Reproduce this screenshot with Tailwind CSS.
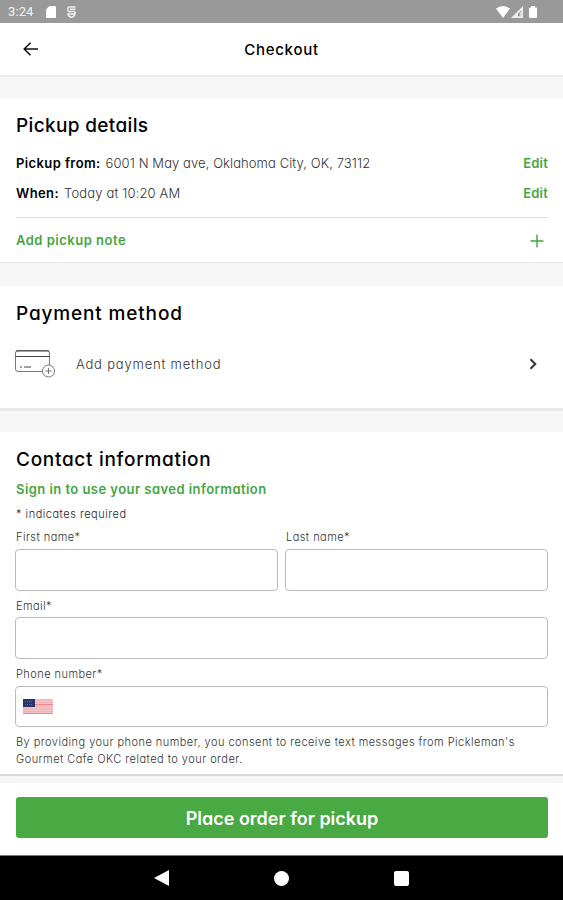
<!DOCTYPE html>
<html lang="en">
  <head>
    <meta charset="UTF-8" />
    <meta name="viewport" content="width=device-width, initial-scale=1.0" />
    <title>Checkout</title>
    <script src="https://cdn.jsdelivr.net/npm/@tailwindcss/browser@4"></script>
  </head>
  <body class="h-[900px] overflow-hidden bg-[#f6f6f6] font-['Inter',sans-serif] text-black [font-feature-settings:'cv11']">
    <!-- Status bar -->
    <div class="flex h-[23px] items-center bg-[#999] pl-2 pr-[26px] pt-px">
      <span class="w-[38px] font-['Roboto',sans-serif] text-[13px] tracking-[0.1px] text-[#f4f4f4]">3:24</span>
      <svg class="h-3 w-[10px]" viewBox="0 0 10 12" fill="#fff">
        <path d="M3.4 0H9a1 1 0 0 1 1 1v10a1 1 0 0 1-1 1H1a1 1 0 0 1-1-1V3.5z" />
      </svg>
      <svg class="ml-[11px] h-3 w-[9px]" viewBox="0 0 9 12" fill="none" stroke="#eee" stroke-width="1.5">
        <path d="M8.5 1H2Q1 1 1 2v2.200Q1 5.500 2 5.500h5q1 0 1 1V8.500Q7.500 10.500 4.500 11.200 1.500 10.500 1 8.500V8h7M3 3.200h5.500" />
      </svg>
      <svg class="ml-auto h-3 w-[14px]" viewBox="0 0 14 12" fill="#fff">
        <path d="M7 12 0 2.600Q7-2.600 14 2.600z" />
      </svg>
      <svg class="ml-px h-3 w-3" viewBox="0 0 12 12">
        <path d="M12 0v12H0z" fill="#eee" />
        <path d="M10.200 4.500v5.700H7V7.500z" fill="#999" />
        <path d="M9.300 6v4" stroke="#eee" />
      </svg>
      <svg class="ml-[6px] h-3 w-2" viewBox="0 0 8 12" fill="#fff">
        <path d="M2 1.500V0h4v1.500h1a1 1 0 0 1 1 1V11a1 1 0 0 1-1 1H1a1 1 0 0 1-1-1V2.500a1 1 0 0 1 1-1z" />
      </svg>
    </div>

    <!-- Header -->
    <header class="grid h-[54px] grid-cols-[1fr_auto_1fr] items-center border-b-2 border-[#eee] bg-white px-[23px]">
      <svg class="h-[14px] w-[15px]" viewBox="0 0 15 14" fill="none" stroke="#111" stroke-width="1.5">
        <path d="M15 7H1M7.500 .700 1.200 7l6.300 6.300" />
      </svg>
      <h1 class="pt-[2px] text-[15px] font-medium tracking-[0.75px]">Checkout</h1>
    </header>

    <!-- Pickup details -->
    <section class="mt-[21px] h-[165px] border-b border-[#e6e6e6] bg-white pr-[15px] pl-4 pt-[14px]">
      <h2 class="text-[19px] leading-7 font-medium tracking-[0.35px]">Pickup details</h2>
      <div class="mt-[9px] flex h-[30px] items-center text-[13px]">
        <span class="mr-[5px] font-semibold tracking-[0.4px]">Pickup from:</span>
        <span class="font-light tracking-[0.08px] text-[#333]">6001 N May ave, Oklahoma City, OK, 73112</span>
        <a class="ml-auto font-semibold tracking-[0.2px] text-[#45a53f]">Edit</a>
      </div>
      <div class="flex h-[30px] items-center text-[13px]">
        <span class="mr-[5px] font-semibold tracking-[0.4px]">When:</span>
        <span class="font-light tracking-[0.15px] text-[#333]">Today at 10:20 AM</span>
        <a class="ml-auto font-semibold tracking-[0.2px] text-[#45a53f]">Edit</a>
      </div>
      <div class="mt-[8px] flex h-[46px] items-center border-t border-[#ddd] text-[13px] text-[#45a53f]">
        <span class="pt-px font-semibold tracking-[0.5px]">Add pickup note</span>
        <svg class="mr-1 ml-auto h-[14px] w-[14px]" viewBox="0 0 14 14" stroke="#45a53f" stroke-width="1.4">
          <path d="M7 .500v13M.500 7h13" />
        </svg>
      </div>
    </section>

    <!-- Payment method -->
    <section class="mt-[23px] h-[125px] border-b-3 border-[#e8e8e8] bg-white px-[15px] pt-[14px]">
      <h2 class="ml-px text-[19px] leading-7 font-medium tracking-[0.85px]">Payment method</h2>
      <div class="mt-[7px] flex h-[58px] items-center">
        <svg class="h-7 w-10" viewBox="0 0 40 28" fill="none" stroke="#777">
          <path d="M27 21.500H3a2.500 2.500 0 0 1-2.500-2.500V3A2.500 2.500 0 0 1 3 .500h29A2.500 2.500 0 0 1 34.500 3v12" />
          <path d="M1 1h33M.500 6.500h34" stroke="#444" />
          <path d="M5 17h2M9 17h7" stroke="#444" />
          <circle cx="33.500" cy="21" r="6" />
          <path d="M30.500 21h6M33.500 18v6" />
        </svg>
        <span class="ml-[21px] pt-[2px] text-[13px] font-light tracking-[0.8px] text-[#333]">Add payment method</span>
        <svg class="mr-[11px] ml-auto h-3 w-[8px]" viewBox="0 0 8 12" fill="none" stroke="#333" stroke-width="2">
          <path d="M1.500 1.200 6.300 6l-4.800 4.800" />
        </svg>
      </div>
    </section>

    <!-- Contact information -->
    <section class="mt-[21px] h-[344px] border-b-2 border-[#d8d8d8] bg-white px-[15px] pt-[14px]">
      <h2 class="ml-px text-[19px] leading-7 font-medium tracking-[0.7px]">Contact information</h2>
      <a class="mt-[5px] ml-px block text-[13px] leading-5 font-semibold tracking-[0.45px] text-[#45a53f]">Sign in to use your saved information</a>
      <p class="mt-[7px] ml-px text-[11px] leading-4 font-light tracking-[0.5px] text-[#222]">* indicates required</p>
      <div class="mt-[7px] grid grid-cols-2 gap-x-[7px]">
        <label class="block text-[11px] leading-4 font-light tracking-[0.45px] text-[#333]">
          <span class="ml-px">First name*</span>
          <input type="text" class="mt-[4px] block h-[42px] w-full rounded border border-[#bbb] bg-white" />
        </label>
        <label class="block text-[11px] leading-4 font-light tracking-[0.45px] text-[#333]">
          <span class="ml-px">Last name*</span>
          <input type="text" class="mt-[4px] block h-[42px] w-full rounded border border-[#bbb] bg-white" />
        </label>
      </div>
      <label class="mt-[7px] block text-[11px] leading-4 font-light tracking-[0.4px] text-[#333]">
        <span class="ml-px">Email*</span>
        <input type="email" class="mt-[3px] block h-[42px] w-full rounded border border-[#bbb] bg-white" />
      </label>
      <label class="mt-[7px] block text-[11px] leading-4 font-light tracking-[0.45px] text-[#333]">
        <span class="ml-px">Phone number*</span>
        <span class="mt-[4px] flex h-[41px] items-center rounded border border-[#bbb] bg-white px-[7px]">
          <svg class="h-[15px] w-[30px]" viewBox="0 0 30 15">
            <rect width="30" height="15" fill="#f6c4c7" />
            <path d="M0 1h30M0 3.300h30M0 7.900h30M0 10.200h30M0 12.500h30" stroke="#f0aeb2" stroke-width=".9" />
            <path d="M0 5.600h30M0 14.500h30" stroke="#e68388" />
            <rect width="12" height="8" fill="#28366f" />
            <path d="M2 2.500h8M2 5.500h8" stroke="#66719b" stroke-width=".8" stroke-dasharray="1 1" />
          </svg>
        </span>
      </label>
      <p class="mt-[7px] ml-px text-[11px] leading-[17px] font-light tracking-[0.465px] text-[#333]">
        By providing your phone number, you consent to receive text messages from Pickleman's<br />Gourmet Cafe OKC related to your order.
      </p>
    </section>

    <!-- Place order -->
    <div class="mt-[7px] h-[73px] border-b border-[#777] bg-white pr-[15px] pl-4 pt-[14px]">
      <button class="flex h-[41px] w-full items-center justify-center rounded-[3px] bg-[#49a942] pt-px text-[18px] font-semibold text-white">Place order for pickup</button>
    </div>

    <!-- Android navigation -->
    <nav class="flex h-[44px] items-center justify-center gap-[105px] bg-black pr-px">
      <svg class="h-4 w-[15px]" viewBox="0 0 15 16" fill="#fff"><path d="M15 0v16L0 8z" /></svg>
      <span class="h-[15px] w-[15px] rounded-full bg-white"></span>
      <span class="h-[15px] w-[15px] rounded-xs bg-white"></span>
    </nav>
  </body>
</html>
